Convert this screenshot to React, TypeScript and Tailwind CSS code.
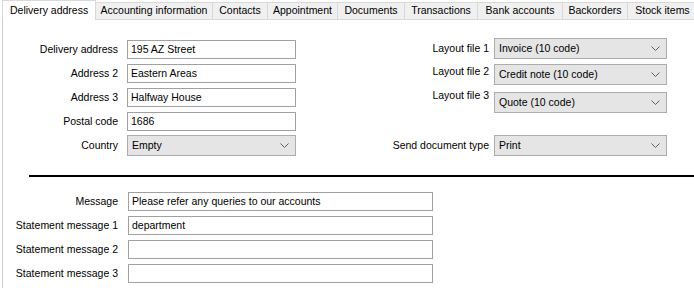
import React from "react";

const tabs = [
  { label: "Accounting information", w: "w-[117px]" },
  { label: "Contacts", w: "w-[55px]" },
  { label: "Appointment", w: "w-[70px]" },
  { label: "Documents", w: "w-[67px]" },
  { label: "Transactions", w: "w-[73px]" },
  { label: "Bank accounts", w: "w-[85px]" },
  { label: "Backorders", w: "w-[65px]" },
  { label: "Stock items", w: "w-[70px]" },
];

function Chevron() {
  return (
    <svg width="9" height="6" viewBox="0 0 9 6" className="shrink-0">
      <polyline points="0.5,0.5 4.5,4.5 8.5,0.5" fill="none" stroke="#606060" strokeWidth="1" />
    </svg>
  );
}

function TextBox({ value, w }: { value?: string; w: string }) {
  return (
    <div className={`${w} h-[19px] border border-[#a0a0a0] bg-white pl-[3px] flex items-center leading-none whitespace-nowrap`}>
      {value}
    </div>
  );
}

function Combo({ value, w }: { value: string; w: string }) {
  return (
    <div className={`${w} h-[21px] border border-[#adadad] bg-[#e5e5e5] pl-[4px] pr-[6px] flex items-center justify-between leading-none whitespace-nowrap`}>
      <span>{value}</span>
      <Chevron />
    </div>
  );
}

export default function App() {
  return (
    <div
      className="w-[694px] h-[288px] bg-white text-black text-[10.5px] overflow-hidden flex flex-col whitespace-nowrap"
      style={{ fontFamily: '"Liberation Sans", Arial, sans-serif' }}
    >
      {/* tab strip */}
      <div className="flex items-start h-[20px] shrink-0">
        <div className="ml-[2px] w-[94px] shrink-0 h-[20px] border-l border-t border-r border-[#d9d9d9] bg-white flex items-center pl-[7px] relative z-10">
          Delivery address
        </div>
        {tabs.map((t) => (
          <div
            key={t.label}
            className={`${t.w} shrink-0 mt-[2px] h-[18px] border border-l-0 border-[#d9d9d9] bg-[#f0f0f0] flex items-center justify-center`}
          >
            {t.label}
          </div>
        ))}
      </div>

      {/* panel */}
      <div className="ml-[2px] flex-1 border-l border-[#cfcfcf] flex flex-col">
        <div className="flex pt-[20px]">
          {/* left fields */}
          <div className="flex flex-col gap-[5px]">
            {[
              ["Delivery address", "195 AZ Street"],
              ["Address 2", "Eastern Areas"],
              ["Address 3", "Halfway House"],
              ["Postal code", "1686"],
            ].map(([l, v]) => (
              <div key={l} className="flex items-center">
                <span className="w-[115px] text-right">{l}</span>
                <div className="ml-[9px]">
                  <TextBox value={v} w="w-[169px]" />
                </div>
              </div>
            ))}
            <div className="flex items-center -mt-[1px]">
              <span className="w-[115px] text-right">Country</span>
              <div className="ml-[9px]">
                <Combo value="Empty" w="w-[169px]" />
              </div>
            </div>
          </div>

          {/* right fields */}
          <div className="ml-[72px] flex flex-col -mt-[2px]">
            <div className="flex items-center">
              <span className="w-[121px] text-right">Layout file 1</span>
              <div className="ml-[5px]">
                <Combo value="Invoice (10 code)" w="w-[173px]" />
              </div>
            </div>
            <div className="flex items-start mt-[5px]">
              <span className="w-[121px] text-right">Layout file 2</span>
              <div className="ml-[5px]">
                <Combo value="Credit note (10 code)" w="w-[173px]" />
              </div>
            </div>
            <div className="flex items-start mt-[7px]">
              <span className="w-[121px] text-right -mt-[4px]">Layout file 3</span>
              <div className="ml-[5px]">
                <Combo value="Quote (10 code)" w="w-[173px]" />
              </div>
            </div>
            <div className="flex items-center mt-[22px]">
              <span className="w-[121px] text-right">Send document type</span>
              <div className="ml-[5px]">
                <Combo value="Print" w="w-[173px]" />
              </div>
            </div>
          </div>
        </div>

        <div className="ml-[26px] mt-[19px] h-[2px] bg-black" />

        <div className="flex flex-col gap-[5px] mt-[15px]">
          {[
            ["Message", "Please refer any queries to our accounts"],
            ["Statement message 1", "department"],
            ["Statement message 2", ""],
            ["Statement message 3", ""],
          ].map(([l, v]) => (
            <div key={l} className="flex items-center">
              <span className="w-[115px] text-right">{l}</span>
              <div className="ml-[10px]">
                <TextBox value={v} w="w-[305px]" />
              </div>
            </div>
          ))}
        </div>
      </div>
    </div>
  );
}
